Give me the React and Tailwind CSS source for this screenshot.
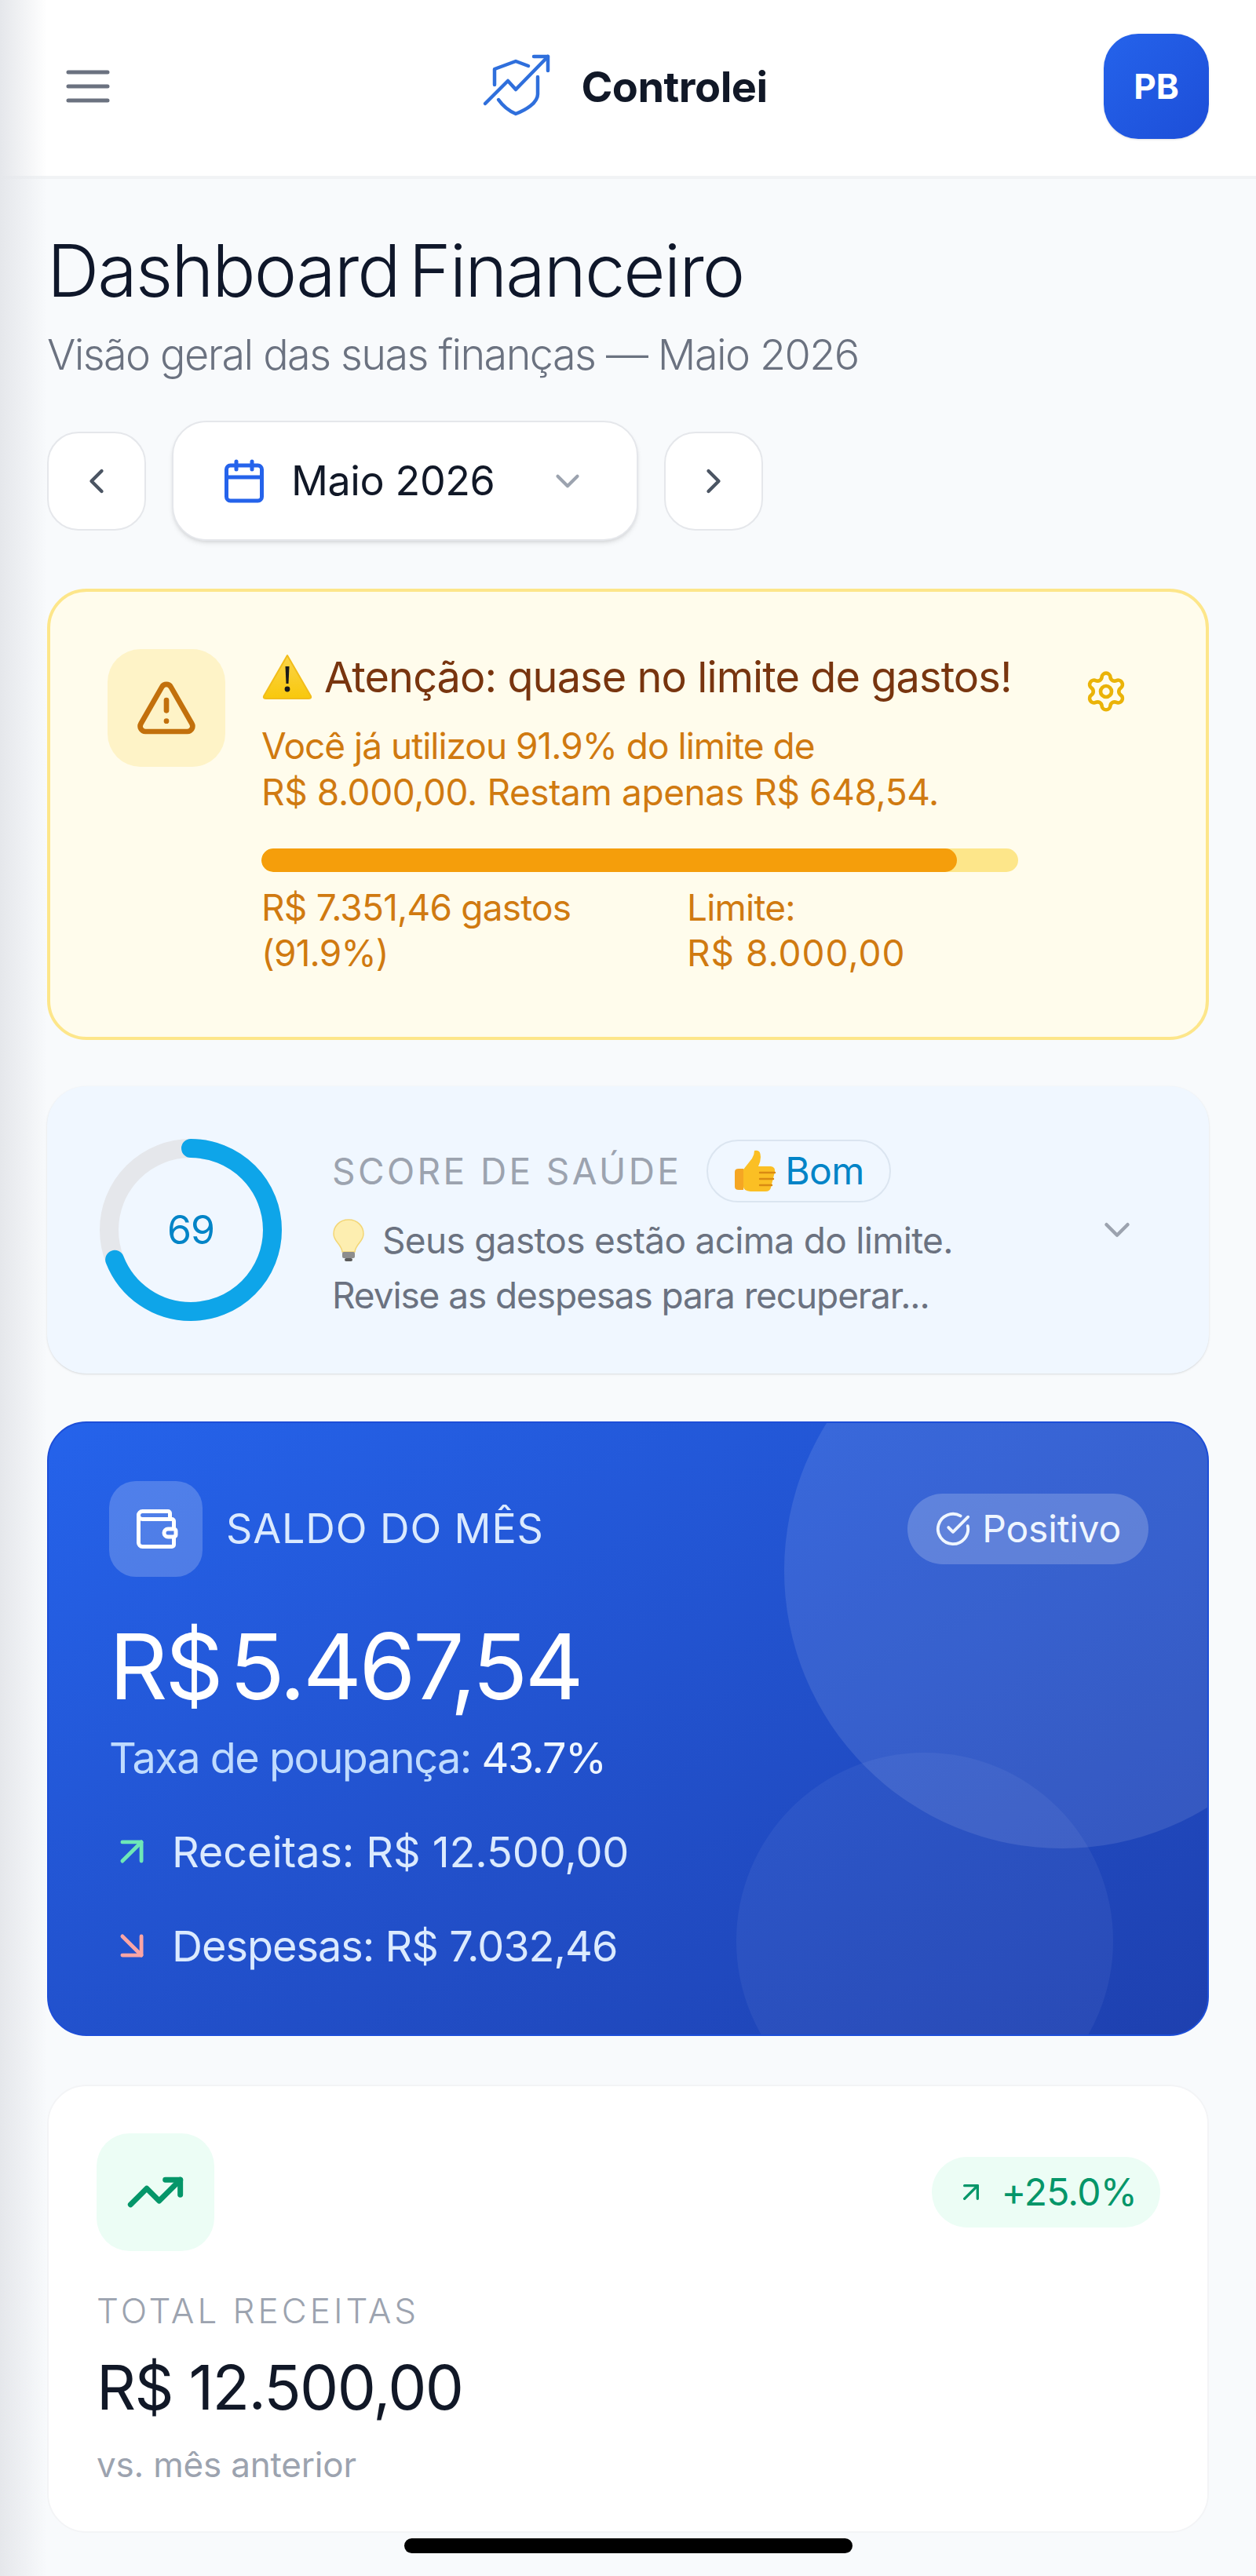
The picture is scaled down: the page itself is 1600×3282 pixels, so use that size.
import {
  AlertTriangle,
  ArrowDownRight,
  ArrowUpRight,
  Calendar,
  ChevronDown,
  ChevronLeft,
  ChevronRight,
  CircleCheckBig,
  Settings,
  TrendingUp,
  Wallet,
} from 'lucide-react';

// Logo: shield with a rising arrow
function Logo() {
  return (
    <svg width="100" height="90" viewBox="50 50 100 90" fill="none" stroke="#2f6fdc" strokeWidth="4.5" strokeLinecap="round" strokeLinejoin="round" className="shrink-0">
      <path d="M58 117 L87 88 L97 99 L138 57" />
      <path d="M120 57 H138 V75" />
      <path d="M113 69 L97 63 L70 73 V93" />
      <path d="M125 83 V105 C125 116 110 125 97 130 C90 127 82 122 75 112" />
    </svg>
  );
}

function WarningEmoji() {
  return (
    <svg width="66" height="60" viewBox="0 0 66 60" className="shrink-0">
      <defs>
        <linearGradient id="warnFill" x1="0" y1="0" x2="0" y2="1">
          <stop offset="0" stopColor="#fbd44a" />
          <stop offset="1" stopColor="#f8c80c" />
        </linearGradient>
      </defs>
      <path d="M33 3 L63 55 Q64 58 60 58 H6 Q2 58 3 55 Z" fill="url(#warnFill)" stroke="#f2bd1a" strokeWidth="2" strokeLinejoin="round" />
      <path d="M30.5 17 H35.5 L34.5 39 H31.5 Z" fill="#1a1a1a" />
      <circle cx="33" cy="46" r="3.4" fill="#1a1a1a" />
    </svg>
  );
}

function ThumbEmoji() {
  return (
    <svg width="58" height="58" viewBox="0 0 58 58" className="shrink-0">
      <path d="M4 30 Q4 26 9 26 H15 V53 H9 Q4 53 4 49 Z" fill="#f5a623" />
      <path d="M15 27 L26 13 Q29 8 29 3 Q37 1 37 11 Q37 17 34 23 H50 Q56 24 55 30 L50 50 Q49 55 43 55 H24 Q15 54 15 49 Z" fill="#fbbf24" />
      <path d="M36 31 H55 M36 39 H53 M36 47 H51" stroke="#d98a12" strokeWidth="2.4" strokeLinecap="round" />
    </svg>
  );
}

function BulbEmoji() {
  return (
    <svg width="42" height="56" viewBox="0 0 42 56" className="shrink-0">
      <path d="M21 2 C9 2 2 11 2 20 C2 30 12 33 13 43 H29 C30 33 40 30 40 20 C40 11 33 2 21 2 Z" fill="#fdeeb0" stroke="#f3d675" strokeWidth="1.5" />
      <rect x="13" y="43" width="16" height="8" rx="2" fill="#8d8d8d" />
      <rect x="16" y="51" width="10" height="4" rx="2" fill="#5c5c5c" />
    </svg>
  );
}

function ScoreRing({ value }) {
  const radius = 104;
  const length = 2 * Math.PI * radius;
  return (
    <svg width="232" height="232" viewBox="0 0 232 232" className="shrink-0 -rotate-90">
      <circle cx="116" cy="116" r={radius} fill="none" stroke="#e5e7eb" strokeWidth="24" />
      <circle
        cx="116"
        cy="116"
        r={radius}
        fill="none"
        stroke="#0ea5e9"
        strokeWidth="24"
        strokeLinecap="round"
        strokeDasharray={`${(length * value) / 100} ${length}`}
      />
    </svg>
  );
}

export default function App() {
  return (
    <div className="relative w-full h-[3282px] overflow-hidden bg-[#f8fafc] font-['Inter',sans-serif]">
      {/* Header */}
      <header className="h-[228px] bg-white border-b-4 border-[#f1f3f5] flex items-center justify-between px-[60px] pb-[4px]">
        <button className="w-[122px] h-[60px] flex items-center pl-[24px]">
          <svg width="56" height="44" viewBox="0 0 56 44" fill="none" stroke="#6b7280" strokeWidth="5" strokeLinecap="round">
            <path d="M3 4 H53 M3 22 H53 M3 40 H53" />
          </svg>
        </button>
        <div className="flex items-center gap-[30px]">
          <Logo />
          <span className="text-[54px] font-bold tracking-[-0.5px] text-[#111827]">Controlei</span>
        </div>
        <div className="w-[134px] h-[134px] rounded-[44px] bg-gradient-to-br from-[#2563eb] to-[#1d4ed8] flex items-center justify-center text-white text-[44px] font-bold shadow-sm">
          PB
        </div>
      </header>

      <main className="px-[60px] pt-[62px] flex flex-col">
        <h1 className="text-[92px] leading-[110px] font-light tracking-[-2px] [word-spacing:-12px] text-[#0f172a]">Dashboard Financeiro</h1>
        <p className="mt-[20px] text-[54px] leading-[64px] font-light tracking-[-1.6px] text-[#6b7280]">Visão geral das suas finanças — Maio 2026</p>

        {/* Month picker */}
        <div className="mt-[52px] flex items-center gap-[33px]">
          <button className="w-[126px] h-[126px] rounded-[40px] bg-white border-2 border-[#e5e7eb] flex items-center justify-center text-[#4b5563]">
            <ChevronLeft size={52} strokeWidth={2} />
          </button>
          <div className="w-[594px] h-[153px] rounded-[44px] bg-white border-2 border-[#e5e7eb] shadow-md flex items-center pl-[60px] text-[#111827]">
            <Calendar size={60} strokeWidth={2} className="text-[#2563eb]" />
            <span className="ml-[30px] text-[52px] tracking-[-0.4px]">Maio 2026</span>
            <ChevronDown size={50} strokeWidth={2} className="ml-[68px] text-[#9ca3af]" />
          </div>
          <button className="w-[126px] h-[126px] rounded-[40px] bg-white border-2 border-[#e5e7eb] flex items-center justify-center text-[#4b5563]">
            <ChevronRight size={52} strokeWidth={2} />
          </button>
        </div>

        {/* Spending limit alert */}
        <section className="mt-[61px] h-[575px] rounded-[50px] bg-[#fffcec] border-4 border-[#fde68a] flex pl-[73px] pt-[73px] pr-[100px]">
          <div className="w-[150px] h-[150px] shrink-0 rounded-[42px] bg-[#fef3c7] flex items-center justify-center">
            <AlertTriangle size={80} strokeWidth={2} className="text-[#c2700c]" />
          </div>
          <div className="ml-[46px] w-[964px] shrink-0">
            <div className="flex items-center gap-[14px] h-[70px]">
              <WarningEmoji />
              <span className="text-[54px] tracking-[-0.9px] text-[#78350f] whitespace-nowrap">Atenção: quase no limite de gastos!</span>
            </div>
            <p className="mt-[24px] text-[46px] leading-[59px] tracking-[-0.8px] text-[#d07a10]">
              <span className="tracking-[-1px]">Você já utilizou 91.9% do limite de</span>
              <br />
              <span className="tracking-[-0.4px]">R$ 8.000,00. Restam apenas R$ 648,54.</span>
            </p>
            <div className="mt-[42px] h-[30px] rounded-full bg-[#fde68a] overflow-hidden">
              <div className="h-full rounded-full bg-[#f59e0b]" style={{ width: '91.9%' }} />
            </div>
            <div className="mt-[16px] flex text-[46px] leading-[58px] tracking-[-0.8px] text-[#d07a10]">
              <div className="w-[542px]">
                R$ 7.351,46 gastos
                <br />
                (91.9%)
              </div>
              <div>
                Limite:
                <br />
                <span className="tracking-[1px]">R$ 8.000,00</span>
              </div>
            </div>
          </div>
          <Settings size={56} strokeWidth={2} className="ml-[84px] mt-[26px] shrink-0 text-[#eab308]" />
        </section>

        {/* Health score */}
        <section className="mt-[59px] h-[366px] rounded-[50px] bg-[#f0f7ff] shadow-sm flex items-center pl-[67px] pr-[90px]">
          <div className="relative shrink-0">
            <ScoreRing value={69} />
            <span className="absolute inset-0 flex items-center justify-center text-[50px] text-[#0284c7] tracking-[-1px]">69</span>
          </div>
          <div className="ml-[64px] flex-1">
            <div className="flex items-center gap-[32px]">
              <span className="text-[46px] tracking-[3.4px] text-[#9ca3af]">SCORE DE SAÚDE</span>
              <span className="h-[80px] rounded-full border-2 border-[#dbe5f0] flex items-center gap-[10px] pl-[30px] pr-[32px] text-[#0284c7] text-[48px] tracking-[-0.6px]">
                <ThumbEmoji />
                Bom
              </span>
            </div>
            <div className="mt-[16px] flex items-center gap-[22px] h-[64px] text-[46px] tracking-[-0.7px] text-[#6b7280]">
              <BulbEmoji />
              <span>Seus gastos estão acima do limite.</span>
            </div>
            <p className="mt-[6px] text-[46px] leading-[64px] tracking-[-1.1px] text-[#6b7280]">Revise as despesas para recuperar...</p>
          </div>
          <ChevronDown size={54} strokeWidth={2} className="text-[#9ca3af]" />
        </section>

        {/* Month balance */}
        <section className="relative mt-[61px] h-[783px] rounded-[50px] overflow-hidden bg-gradient-to-br from-[#2563eb] to-[#1e40af] border-2 border-[#1d4ed8] pl-[77px] pr-[75px] pt-[74px] text-white">
          <div className="absolute left-[937px] top-[-166px] w-[708px] h-[708px] rounded-full bg-white/10" />
          <div className="absolute left-[876px] top-[420px] w-[480px] h-[480px] rounded-full bg-white/5" />
          <div className="relative flex items-center justify-between">
            <div className="flex items-center gap-[30px]">
              <div className="w-[119px] h-[122px] rounded-[34px] bg-white/20 flex items-center justify-center">
                <Wallet size={60} strokeWidth={2} />
              </div>
              <span className="text-[52px] tracking-[0.9px] text-[#dbeafe]">SALDO DO MÊS</span>
            </div>
            <div className="h-[90px] rounded-full bg-white/20 flex items-center gap-[14px] px-[35px] text-[48px] tracking-[-0.2px] text-[#eff6ff]">
              <CircleCheckBig size={46} strokeWidth={2} />
              Positivo
            </div>
          </div>
          <p className="relative mt-[44px] text-[116px] leading-[140px] tracking-[-3.5px] [word-spacing:-18px]">R$ 5.467,54</p>
          <p className="relative mt-[12px] text-[54px] leading-[70px] tracking-[-1.5px] text-[#bfdbfe]">
            Taxa de poupança: <span className="text-[#eff6ff]">43.7%</span>
          </p>
          <div className="relative mt-[52px] flex items-center gap-[22px] h-[64px] text-[54px] text-[#dbeafe]">
            <ArrowUpRight size={58} strokeWidth={2} className="text-[#6ee7b7]" />
            <span className="tracking-[-0.1px]">Receitas: R$ 12.500,00</span>
          </div>
          <div className="relative mt-[56px] flex items-center gap-[22px] h-[64px] text-[54px] text-[#dbeafe]">
            <ArrowDownRight size={58} strokeWidth={2} className="text-[#fca5a5]" />
            <span className="tracking-[-1px]">Despesas: R$ 7.032,46</span>
          </div>
        </section>

        {/* Total income */}
        <section className="mt-[62px] h-[571px] rounded-[50px] bg-white border-2 border-[#f3f4f6] pl-[61px] pr-[60px] pt-[60px]">
          <div className="flex items-center justify-between">
            <div className="w-[150px] h-[150px] rounded-[42px] bg-[#ecfdf5] flex items-center justify-center">
              <TrendingUp size={76} strokeWidth={2.2} className="text-[#059669]" />
            </div>
            <div className="h-[90px] rounded-full bg-[#ecfdf5] flex items-center gap-[18px] px-[30px] text-[48px] tracking-[-0.8px] text-[#059669]">
              <ArrowUpRight size={40} strokeWidth={2} />
              +25.0%
            </div>
          </div>
          <p className="mt-[48px] text-[44px] leading-[56px] font-light tracking-[4px] text-[#9ca3af]">TOTAL RECEITAS</p>
          <p className="mt-[22px] text-[78px] leading-[96px] tracking-[-1.6px] text-[#111827]">R$ 12.500,00</p>
          <p className="mt-[22px] text-[44px] leading-[56px] tracking-[-0.2px] text-[#9ca3af]">vs. mês anterior</p>
        </section>
      </main>

      {/* Drawer edge shadow and home indicator sit over the page */}
      <div className="absolute inset-y-0 left-0 w-[60px] bg-gradient-to-r from-[#e5e7eb] to-transparent pointer-events-none" />
      <div className="absolute left-[515px] bottom-[29px] w-[571px] h-[19px] rounded-full bg-black" />
    </div>
  );
}
